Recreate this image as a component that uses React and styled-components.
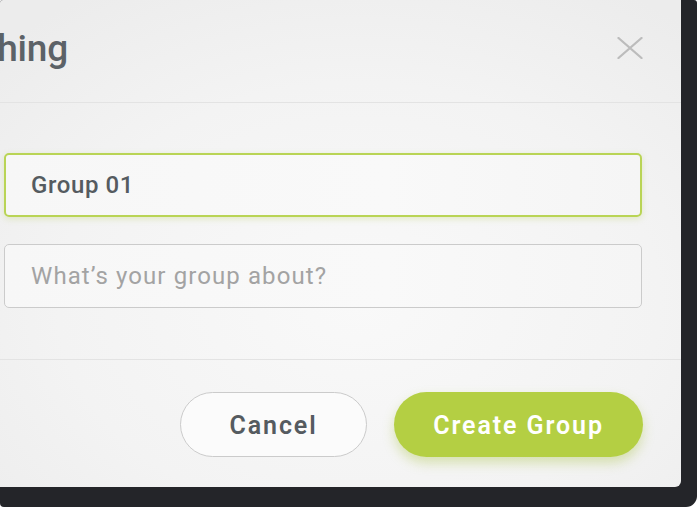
import React from 'react'
import styled, { createGlobalStyle } from 'styled-components'

const Global = createGlobalStyle`
html, body {
  margin: 0;
  padding: 0;
  background: #ffffff;
  font-family: Roboto, "Noto Sans", sans-serif;
}
* { box-sizing: border-box; }
`

function CloseIcon() {
  return (
    <svg width="26" height="22" viewBox="0 0 26 22">
      <path d="M1.5 1 L24.5 21 M24.5 1 L1.5 21" stroke="#bcbcbc" strokeWidth="2.3" strokeLinecap="round" fill="none" />
    </svg>
  )
}

export default function App() {
  return (
    <>
      <Global />
      <Frame>
        <Modal>
          <Header>
            <TitleClip>
              <Title>Start talking about something</Title>
            </TitleClip>
            <CloseButton aria-label="Close"><CloseIcon /></CloseButton>
          </Header>

          <Body>
            <Field active defaultValue="Group 01" />
            <Field placeholder="What’s your group about?" />
          </Body>

          <Footer>
            <Button>Cancel</Button>
            <Button primary>Create Group</Button>
          </Footer>
        </Modal>
      </Frame>
    </>
  )
}

const Frame = styled.div`
width: 697px;
height: 507px;
background: #242529;
border-radius: 3px 3px 11px 4px;
overflow: hidden;
display: flex;
align-items: flex-start;
`

const Modal = styled.div`
flex: none;
margin-left: -35px;
width: 716px;
height: 487px;
border-radius: 0 0 6px 0;
background: radial-gradient(ellipse 70% 75% at 55% 62%, #f9f9f9 0%, #f3f3f3 60%, #ececec 100%);
display: flex;
flex-direction: column;
`

const Header = styled.div`
height: 103px;
padding: 0 38px 6px 39px;
border-bottom: 1px solid #e3e3e3;
display: flex;
align-items: center;
justify-content: space-between;
`

const TitleClip = styled.div`
width: 64px;
display: flex;
justify-content: flex-end;
white-space: nowrap;
`

const Title = styled.h2`
margin: 0;
flex: none;
font-size: 37px;
font-weight: 500;
color: #5c6267;
letter-spacing: -0.2px;
`

const CloseButton = styled.button`
border: none;
background: none;
padding: 0;
display: flex;
cursor: pointer;
`

const Body = styled.div`
padding: 50px 39px 51px 39px;
border-bottom: 1px solid #e3e3e3;
display: flex;
flex-direction: column;
gap: 27px;
`

const Field = styled.input`
height: 64px;
width: 100%;
padding: 0 24px;
border-radius: 5px;
border: ${p => p.active ? '2px solid #b9d455' : '1px solid #cbcbcb'};
box-shadow: ${p => p.active ? '0 2px 6px rgba(170, 200, 60, 0.25)' : 'none'};
background: linear-gradient(90deg, #f7f7f7, #f9f9f9 60%, #f5f5f5);
font-family: Roboto, sans-serif;
font-size: 24px;
font-weight: 500;
letter-spacing: 0.6px;
color: #555b60;
outline: none;
padding-left: ${p => p.active ? '25px' : '26px'};
&::placeholder {
  color: #a3a3a3;
  font-weight: 400;
  letter-spacing: 1.1px;
}
`

const Footer = styled.div`
flex: 1;
padding: 2px 38px 0 0;
display: flex;
align-items: center;
justify-content: flex-end;
gap: 27px;
`

const Button = styled.button`
height: 65px;
width: ${p => p.primary ? '249px' : '187px'};
border-radius: 33px;
border: ${p => p.primary ? 'none' : '1px solid #cbcbcb'};
background: ${p => p.primary ? '#b4cf43' : '#fbfbfb'};
box-shadow: ${p => p.primary ? '0 6px 12px rgba(160, 190, 50, 0.35)' : 'none'};
color: ${p => p.primary ? '#ffffff' : '#555b60'};
font-family: Roboto, sans-serif;
font-size: 25px;
font-weight: 600;
letter-spacing: 1.9px;
padding-top: 2px;
cursor: pointer;
`
